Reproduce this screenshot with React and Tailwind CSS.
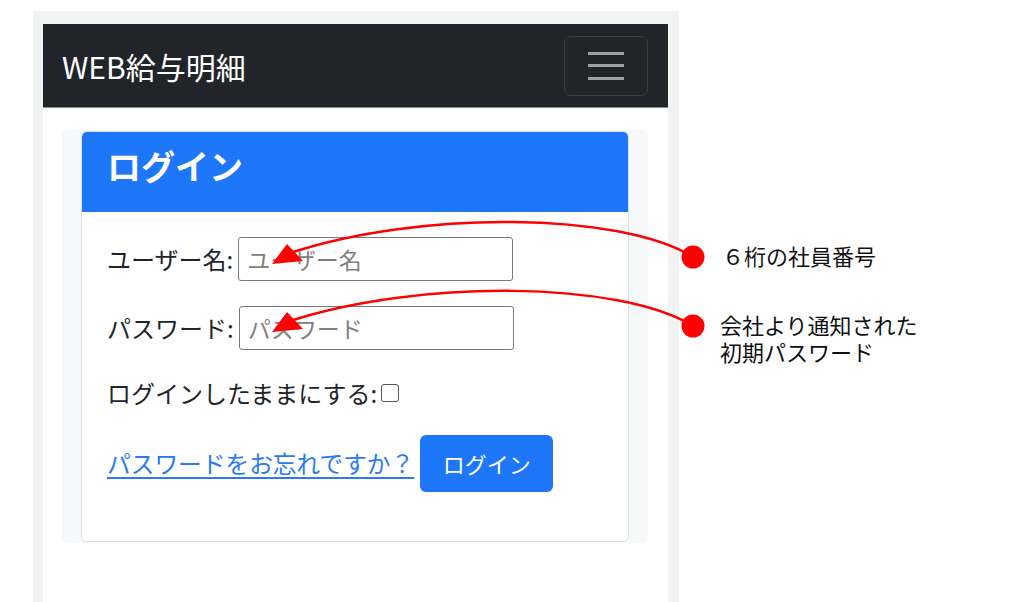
import React from "react";

const jp = { fontFamily: '"Noto Sans CJK JP", "Noto Sans", sans-serif' };

const Navbar = () => (
  <div className="h-[84px] bg-[#212529] border-b border-[#8a8d90] flex items-center justify-between pl-[19px] pr-[20px]">
    <span className="text-white text-[30px] leading-none">WEB給与明細</span>
    <button className="w-[84px] h-[60px] rounded-[7px] border border-[#3a3e43] flex flex-col items-center justify-center gap-[9.5px]">
      <span className="block w-[36px] h-[3px] bg-[#a0a1a3]" />
      <span className="block w-[36px] h-[3px] bg-[#a0a1a3]" />
      <span className="block w-[36px] h-[3px] bg-[#a0a1a3]" />
    </button>
  </div>
);

const LoginCard = () => (
  <div className="bg-white border border-[#dcdfe2] rounded-[6px] overflow-hidden">
    {/* Card header */}
    <div className="h-[80px] bg-[#1e76f8] flex items-center pl-[25px]">
      <h2 className="text-white text-[34px] font-bold leading-none pb-[12px]">ログイン</h2>
    </div>

    {/* Card body */}
    <div className="pl-[25px] pt-[25px] pb-[49px] text-[#212529]">
      <div className="flex items-center h-[44px]">
        <label className="text-[24px] leading-none">ユーザー名:</label>
        <input
          type="text"
          placeholder="ユーザー名"
          className="ml-[5px] w-[275px] h-[44px] border border-[#7a7a7a] rounded-[3px] px-[8px] text-[23px] placeholder:text-[#808080] outline-none"
        />
      </div>
      <div className="flex items-center h-[44px] mt-[25px]">
        <label className="text-[24px] leading-none">パスワード:</label>
        <input
          type="password"
          placeholder="パスワード"
          className="ml-[5px] w-[275px] h-[44px] border border-[#7a7a7a] rounded-[3px] px-[8px] text-[23px] placeholder:text-[#808080] outline-none"
        />
      </div>
      <div className="flex items-center h-[32px] mt-[27px]">
        <span className="text-[24px] leading-none">ログインしたままにする:</span>
        <span className="ml-[4px] w-[18px] h-[18px] border border-[#555] rounded-[3px] bg-white" />
      </div>
      <div className="flex items-center mt-[26px]">
        <a href="#" className="text-[23.7px] leading-none text-[#2a7af5] underline underline-offset-[4px]">
          パスワードをお忘れですか？
        </a>
        <button className="ml-[6px] w-[133px] h-[57px] rounded-[6px] bg-[#1e76f8] text-white text-[22px]">
          ログイン
        </button>
      </div>
    </div>
  </div>
);

const Annotations = () => (
  <div className="pl-[41px] pt-[241px] text-[22px] leading-[28px] text-[#111]">
    <div className="pl-[2px]">６桁の社員番号</div>
    <div className="mt-[42px] flex flex-col">
      <span className="leading-[27px]">会社より通知された</span>
      <span className="leading-[27px]">初期パスワード</span>
    </div>
  </div>
);

const Arrows = () => (
  <svg className="absolute inset-0 pointer-events-none" width="1024" height="602" viewBox="0 0 1024 602">
    <g fill="none" stroke="#ff0000" strokeWidth="2.5">
      <path d="M693,257 C620,212 420,210 290,253" />
      <path d="M693,326 C620,281 420,279 290,321" />
    </g>
    <g fill="#ff0000">
      <polygon points="272,264 287,244 303,261" />
      <polygon points="272,332 287,312 303,329" />
      <circle cx="693" cy="257" r="11.5" />
      <circle cx="693" cy="326" r="11.5" />
    </g>
  </svg>
);

export default function App() {
  return (
    <div className="relative w-[1024px] h-[602px] bg-white overflow-hidden flex" style={jp}>
      <div className="ml-[33px] mt-[11px] w-[646px] bg-[#f2f3f3] pl-[10px] pr-[11px] pt-[13px]">
        <div className="bg-white h-full">
          <Navbar />
          <div className="pl-[19px] pr-[20px] pt-[22px]">
            <div className="bg-[#f7f8fa] rounded-[6px] pt-[1px] px-[19px] pb-[1px]">
              <LoginCard />
            </div>
          </div>
        </div>
      </div>
      <Annotations />
      <Arrows />
    </div>
  );
}
